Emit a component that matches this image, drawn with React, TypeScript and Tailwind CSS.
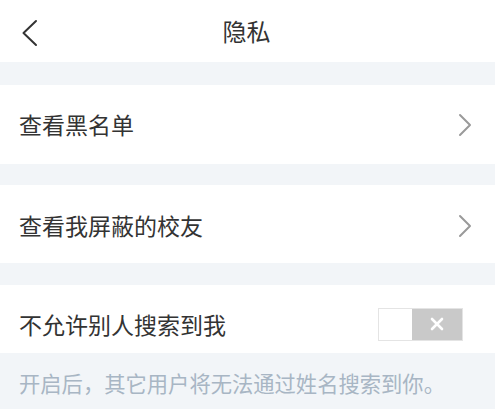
import React from "react";

const font = { fontFamily: '"Noto Sans CJK SC", "Noto Sans", sans-serif' };

function Chevron() {
  return (
    <svg width="16" height="24" viewBox="0 0 16 24" fill="none">
      <path d="M3 2 L13 12 L3 22" stroke="#9a9a9a" strokeWidth="2" strokeLinecap="round" strokeLinejoin="round" />
    </svg>
  );
}

export default function App() {
  return (
    <div className="w-[495px] h-[409px] bg-[#f2f5f8] flex flex-col overflow-hidden" style={font}>
      <div className="h-[62px] bg-white flex items-center relative">
        <div className="absolute left-[21px] top-[19px]">
          <svg width="18" height="28" viewBox="0 0 18 28" fill="none">
            <path d="M15 2 L2.5 14 L15 26" stroke="#333333" strokeWidth="2" strokeLinecap="round" strokeLinejoin="round" />
          </svg>
        </div>
        <div className="flex-1 text-center text-[24px] text-[#333333] leading-none pr-[2px]">隐私</div>
      </div>
      <div className="h-[23px]" />
      <div className="h-[79px] bg-white flex items-center justify-between pl-[19px] pr-[22px]">
        <span className="text-[23px] text-[#333333] leading-none">查看黑名单</span>
        <Chevron />
      </div>
      <div className="h-[21px]" />
      <div className="h-[78px] bg-white flex items-center justify-between pl-[19px] pr-[22px] pt-[3px]">
        <span className="text-[23px] text-[#333333] leading-none">查看我屏蔽的校友</span>
        <Chevron />
      </div>
      <div className="h-[22px]" />
      <div className="h-[68px] bg-white flex items-center justify-between pl-[19px] pr-[32px] pt-[10px]">
        <span className="text-[23px] text-[#333333] leading-none">不允许别人搜索到我</span>
        <div className="w-[85px] h-[33px] flex border border-[#e4e4e4]">
          <div className="w-[33px] h-full bg-white" />
          <div className="flex-1 h-full bg-[#c9c9c9] flex items-center justify-center">
            <svg width="14" height="14" viewBox="0 0 14 14">
              <path d="M2 2 L12 12 M12 2 L2 12" stroke="#ffffff" strokeWidth="2.6" strokeLinecap="round" />
            </svg>
          </div>
        </div>
      </div>
      <div className="flex-1 flex items-center pl-[19px] pt-[4px]">
        <span className="text-[21.3px] text-[#a8b6c4] leading-none">开启后，其它用户将无法通过姓名搜索到你。</span>
      </div>
    </div>
  );
}
